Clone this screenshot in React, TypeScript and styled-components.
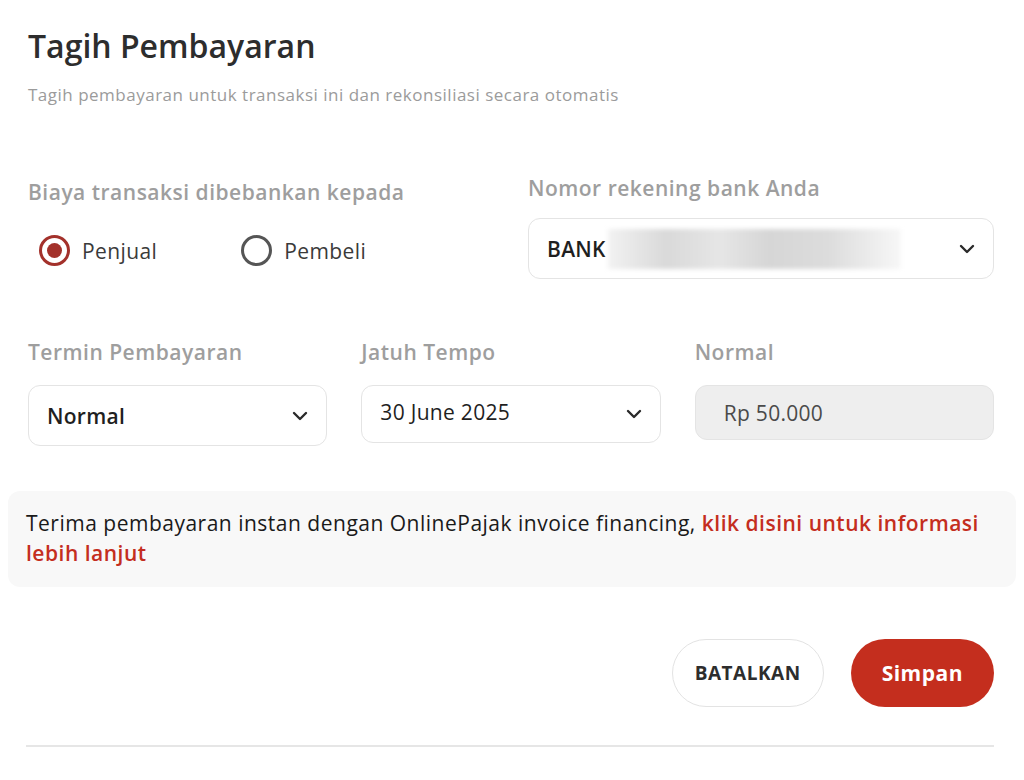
import styled, { createGlobalStyle } from "styled-components";

const GlobalStyle = createGlobalStyle`
  html, body {
    margin: 0;
    padding: 0;
    background: #ffffff;
    font-family: "Open Sans", "Noto Sans", sans-serif;
    color: #2b2b2b;
  }
`;

const Page = styled.div`
  width: 1024px;
  box-sizing: border-box;
  padding: 26px 30px 0 28px;
`;

const Title = styled.h1`
  margin: 0;
  font-size: 32px;
  font-weight: 600;
  line-height: 40px;
  color: #2d2d2d;
`;

const Subtitle = styled.p`
  margin: 18px 0 0;
  font-size: 17px;
  letter-spacing: 0.5px;
  line-height: 22px;
  color: #9b9b9b;
`;

const Grid = styled.div<{ cols: number; top: number }>`
  display: grid;
  grid-template-columns: repeat(${(p) => p.cols}, 1fr);
  column-gap: 34px;
  margin-top: ${(p) => p.top}px;
`;

const Field = styled.div`
  display: flex;
  flex-direction: column;
`;

const Label = styled.label<{ gap: number }>`
  font-size: 21px;
  font-weight: 600;
  letter-spacing: 0.5px;
  line-height: 26px;
  color: #9e9e9e;
  margin-bottom: ${(p) => p.gap}px;
`;

const RadioGroup = styled.div`
  display: flex;
  align-items: center;
  gap: 84px;
  padding-left: 11px;
  margin-top: 30px;
`;

const RadioOption = styled.div`
  display: flex;
  align-items: center;
  gap: 12px;
  font-size: 21px;
  letter-spacing: 0.4px;
  color: #3a3a3a;
`;

const RadioCircle = styled.span<{ checked?: boolean }>`
  width: 31px;
  height: 31px;
  box-sizing: border-box;
  border-radius: 50%;
  border: 3px solid ${(p) => (p.checked ? "#a3312b" : "#555555")};
  display: flex;
  align-items: center;
  justify-content: center;
  &::after {
    content: "";
    display: ${(p) => (p.checked ? "block" : "none")};
    width: 15px;
    height: 15px;
    border-radius: 50%;
    background: #a3312b;
  }
`;

const SelectBox = styled.div<{ h: number; disabled?: boolean }>`
  height: ${(p) => p.h}px;
  box-sizing: border-box;
  border: 1.5px solid #e4e4e4;
  border-radius: 12px;
  background: ${(p) => (p.disabled ? "#eeeeee" : "#ffffff")};
  display: flex;
  align-items: center;
  padding: 0 18px 0 18px;
  font-size: 21px;
  letter-spacing: 0.3px;
  color: #1f1f1f;
`;

const Value = styled.span<{ bold?: boolean; muted?: boolean; indent?: number }>`
  flex: 1;
  font-weight: ${(p) => (p.bold ? 600 : 500)};
  color: ${(p) => (p.muted ? "#4a4a4a" : "#1f1f1f")};
  padding-left: ${(p) => p.indent ?? 0}px;
  display: flex;
  align-items: center;
`;

const Blur = styled.span`
  width: 293px;
  height: 40px;
  margin-left: 2px;
  background: linear-gradient(
    90deg,
    #f2f2f2 0%,
    #d9d9d9 20%,
    #e6e6e6 38%,
    #d6d6d6 55%,
    #dcdcdc 75%,
    #f7f7f7 100%
  );
  filter: blur(2px);
`;

const Chevron = () => (
  <svg width="16" height="10" viewBox="0 0 16 10" fill="none">
    <path d="M2 2l6 6 6-6" stroke="#2a2a2a" strokeWidth="2.4" strokeLinecap="round" strokeLinejoin="round" />
  </svg>
);

const InfoBox = styled.div`
  margin: 45px -22px 0 -20px;
  background: #f8f8f8;
  border-radius: 12px;
  padding: 17px 18px 19px;
  font-size: 21px;
  letter-spacing: 0.5px;
  line-height: 30px;
  color: #1a1a1a;
`;

const Link = styled.a`
  color: #c42e1e;
  font-weight: 600;
  text-decoration: none;
`;

const Actions = styled.div`
  display: flex;
  justify-content: flex-end;
  gap: 27px;
  margin-top: 52px;
`;

const Button = styled.button<{ primary?: boolean }>`
  height: 68px;
  border-radius: 34px;
  font-family: inherit;
  font-size: ${(p) => (p.primary ? 21 : 19)}px;
  font-weight: 700;
  padding: 0 ${(p) => (p.primary ? 31 : 22)}px;
  border: ${(p) => (p.primary ? "none" : "1.5px solid #e3e3e3")};
  background: ${(p) => (p.primary ? "#c42e1e" : "#ffffff")};
  color: ${(p) => (p.primary ? "#ffffff" : "#2d2d2d")};
  letter-spacing: 0.5px;
`;

const Divider = styled.hr`
  margin: 38px 0 0 -2px;
  border: none;
  border-top: 2px solid #e6e6e6;
`;

export default function App() {
  return (
    <Page>
      <GlobalStyle />
      <Title>Tagih Pembayaran</Title>
      <Subtitle>Tagih pembayaran untuk transaksi ini dan rekonsiliasi secara otomatis</Subtitle>

      <Grid cols={2} top={69}>
        <Field>
          <Label gap={0} style={{ marginTop: 4 }}>Biaya transaksi dibebankan kepada</Label>
          <RadioGroup>
            <RadioOption>
              <RadioCircle checked />
              Penjual
            </RadioOption>
            <RadioOption>
              <RadioCircle />
              Pembeli
            </RadioOption>
          </RadioGroup>
        </Field>
        <Field>
          <Label gap={17}>Nomor rekening bank Anda</Label>
          <SelectBox h={61}>
            <Value bold>
              BANK
              <Blur />
            </Value>
            <Chevron />
          </SelectBox>
        </Field>
      </Grid>

      <Grid cols={3} top={60}>
        <Field>
          <Label gap={20}>Termin Pembayaran</Label>
          <SelectBox h={61}>
            <Value bold>Normal</Value>
            <Chevron />
          </SelectBox>
        </Field>
        <Field>
          <Label gap={20}>Jatuh Tempo</Label>
          <SelectBox h={58}>
            <Value style={{ marginTop: -4 }}>30 June 2025</Value>
            <Chevron />
          </SelectBox>
        </Field>
        <Field>
          <Label gap={20}>Normal</Label>
          <SelectBox h={55} disabled>
            <Value muted indent={10}>Rp 50.000</Value>
          </SelectBox>
        </Field>
      </Grid>

      <InfoBox>
        Terima pembayaran instan dengan OnlinePajak invoice financing,{" "}
        <Link href="#">klik disini untuk informasi lebih lanjut</Link>
      </InfoBox>

      <Actions>
        <Button>BATALKAN</Button>
        <Button primary>Simpan</Button>
      </Actions>

      <Divider />
    </Page>
  );
}
